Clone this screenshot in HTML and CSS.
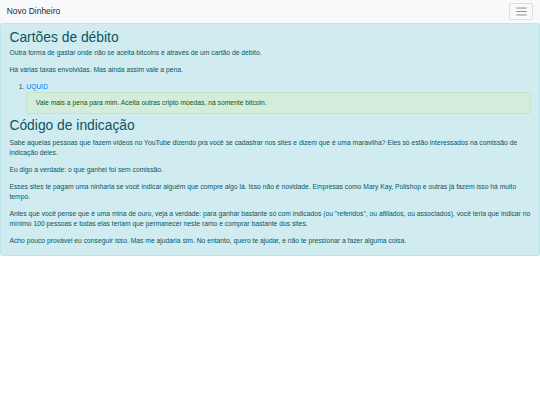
FILE: index.html
```html
<!DOCTYPE html>
<html lang="pt">
<head>
<meta charset="utf-8">
<title>Novo Dinheiro</title>
<link rel="stylesheet" href="styles.css">
</head>
<body>
<nav class="navbar">
  <a class="brand" href="#">Novo Dinheiro</a>
  <button class="toggler" type="button" aria-label="Menu">
    <svg class="toggler-icon" viewBox="0 0 30 30" xmlns="http://www.w3.org/2000/svg">
      <path stroke="rgba(0,0,0,0.5)" stroke-linecap="round" stroke-miterlimit="10" stroke-width="2" d="M4 7h22M4 15h22M4 23h22"/>
    </svg>
  </button>
</nav>
<div class="alert alert-info">
  <h2 class="heading">Cartões de débito</h2>
  <p>Outra forma de gastar onde não se aceita bitcoins é através de um cartão de débito.</p>
  <p>Há várias taxas envolvidas. Mas ainda assim vale a pena.</p>
  <ol class="list">
    <li>
      <a href="#" class="link">UQUID</a>
      <div class="alert alert-success">Vale mais a pena para mim. Aceita outras cripto moedas, ná somente bitcoin.</div>
    </li>
  </ol>
  <h2 class="heading heading-second">Código de indicação</h2>
  <p>Sabe aquelas pessoas que fazem vídeos no YouTube dizendo pra você se cadastrar nos sites e dizem que é uma maravilha? Eles só estão interessados na comissão de indicação deles.</p>
  <p>Eu digo a verdade: o que ganhei foi sem comissão.</p>
  <p>Esses sites te pagam uma ninharia se você indicar alguém que compre algo lá. Isso não é novidade. Empresas como Mary Kay, Polishop e outras já fazem isso há muito tempo.</p>
  <p>Antes que você pense que é uma mina de ouro, veja a verdade: para ganhar bastante só com indicados (ou "referidos", ou afiliados, ou associados), você teria que indicar no mínimo 100 pessoas e todas elas teriam que permanecer neste ramo e comprar bastante dos sites.</p>
  <p class="last">Acho pouco provável eu conseguir isso. Mas me ajudaria sim. No entanto, quero te ajudar, e não te pressionar a fazer alguma coisa.</p>
</div>
</body>
</html>
```

FILE: styles.css
```css
html {
  font-size: 6.75px;
}
body {
  margin: 0;
  font-family: "Liberation Sans", Arial, sans-serif;
  font-size: 1rem;
  line-height: 1.5;
  color: #212529;
  background: #fff;
}
.navbar {
  display: flex;
  align-items: center;
  justify-content: space-between;
  height: 23px;
  box-sizing: border-box;
  padding: 0 1rem;
  background: #f8f9fa;
}
.brand {
  font-size: 1.25rem;
  line-height: 1.5;
  color: rgba(0, 0, 0, 0.9);
  text-decoration: none;
}
.toggler {
  display: flex;
  align-items: center;
  justify-content: center;
  width: 24px;
  height: 17px;
  padding: 0;
  background: transparent;
  border: 1px solid rgba(0, 0, 0, 0.1);
  border-radius: 0.25rem;
}
.toggler-icon {
  width: 13px;
  height: 13px;
  display: block;
}
.alert {
  border: 1px solid transparent;
  border-radius: 0.25rem;
  padding: 0.75rem 1.25rem;
}
.alert-info {
  background: #d1ecf1;
  border-color: #bee5eb;
  color: #0c5460;
}
.alert-success {
  background: #d4edda;
  border-color: #c3e6cb;
  color: #155724;
}
.heading {
  margin: 0 0 0.35rem;
  font-size: 2.05rem;
  font-weight: 400;
  line-height: 1.2;
}
.heading-second {
  margin-bottom: 0.7rem;
}
p {
  margin: 0 0 1rem;
}
p.last {
  margin-bottom: 0.6rem;
}
.list {
  margin: 0 0 0.35rem;
  padding-left: 2.5rem;
}
.link {
  color: #007bff;
  text-decoration: none;
}
```
